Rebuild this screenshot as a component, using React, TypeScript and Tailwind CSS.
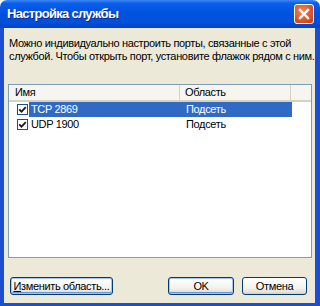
import React from "react";

const font = "font-['Liberation_Sans','DejaVu_Sans',sans-serif]";

const CheckBox: React.FC = () => (
  <span className="flex h-[11px] w-[11px] shrink-0 items-center justify-center border border-[#1c5180] bg-white">
    <svg width="9" height="9" viewBox="0 0 9 9">
      <path d="M1.2 4.3 L3.5 6.6 L7.8 2.1" fill="none" stroke="#1a1a1a" strokeWidth="1.8" />
    </svg>
  </span>
);

const rows = [
  { name: "TCP 2869", scope: "Подсеть", selected: true },
  { name: "UDP 1900", scope: "Подсеть", selected: false },
];

const XpButton: React.FC<{
  label: React.ReactNode;
  width: string;
  focused?: boolean;
}> = ({ label, width, focused }) => (
  <button
    type="button"
    className={`${width} h-[18px] whitespace-nowrap rounded-[3px] border border-[#003c74] bg-[linear-gradient(to_bottom,#ffffff_0%,#f4f3ee_60%,#dcd9cd_100%)] p-0 text-[11px] leading-none tracking-[-0.35px] text-black ${
      focused
        ? "shadow-[inset_0_0_0_1px_#a9c4ee,inset_0_-1px_0_1px_#6b93dd]"
        : "shadow-[inset_0_-1px_0_#d6d0c5]"
    }`}
  >
    {label}
  </button>
);

export default function App() {
  return (
    <div className={`flex h-[306px] w-[320px] flex-col bg-white ${font}`}>
      <div className="flex h-[28px] shrink-0 items-center justify-between rounded-t-[7px] bg-[linear-gradient(to_bottom,#3d87f5_0%,#0a5ee8_12%,#0053e0_45%,#0050da_80%,#0742c4_100%)] pl-[7px] pr-[6px]">
        <span className="text-[13px] font-bold tracking-[-0.7px] text-white [text-shadow:1px_1px_0_#0b2a8a]">
          Настройка службы
        </span>
        <span className="flex h-[20px] w-[20px] items-center justify-center rounded-[3px] border border-white bg-[radial-gradient(circle_at_40%_35%,#f08a62_0%,#e0552a_55%,#c23c14_100%)]">
          <svg width="12" height="12" viewBox="0 0 12 12">
            <path d="M2 2 L10 10 M10 2 L2 10" stroke="white" strokeWidth="2.4" strokeLinecap="square" />
          </svg>
        </span>
      </div>

      <div className="flex flex-1 flex-col border-b-[3px] border-l-[4px] border-r-[5px] border-[#1b4fd2] bg-[#ece9d8] text-[11px] tracking-[-0.35px]">
        <div className="ml-[5px] mt-[9px] leading-[13px] text-black">
          <div className="whitespace-nowrap">Можно индивидуально настроить порты, связанные с этой</div>
          <div className="whitespace-nowrap">службой. Чтобы открыть порт, установите флажок рядом с ним.</div>
        </div>

        <div className="ml-[4px] mt-[21px] flex h-[174px] w-[304px] flex-col border border-[#7f9db9] bg-white">
          <div className="flex h-[17px] shrink-0 border-b-2 border-[#d6d2c2] bg-[#f6f5f0] text-black">
            <div className="flex w-[171px] items-center border-r border-[#d6d2c2] pl-[6px]">Имя</div>
            <div className="flex w-[111px] items-center border-r border-[#d6d2c2] pl-[5px]">Область</div>
            <div className="flex-1" />
          </div>
          {rows.map((row) => (
            <div key={row.name} className="flex h-[15px] items-center">
              <div className="flex w-[20px] justify-end pl-[8px] pr-[1px]">
                <CheckBox />
              </div>
              <div
                className={`flex h-full w-[263px] items-center ${
                  row.selected ? "bg-[#316ac5] text-white" : "text-black"
                }`}
              >
                <span className="w-[157px] pl-[2px]">{row.name}</span>
                <span>{row.scope}</span>
              </div>
            </div>
          ))}
        </div>

        <div className="mt-[19px] flex items-center pl-[6px]">
          <XpButton
            width="w-[103px]"
            focused
            label={
              <>
                <span className="underline">И</span>зменить область...
              </>
            }
          />
          <div className="flex-1" />
          <XpButton width="w-[66px]" focused label="OK" />
          <div className="w-[8px]" />
          <XpButton width="w-[65px]" label="Отмена" />
          <div className="w-[8px]" />
        </div>
      </div>
    </div>
  );
}
